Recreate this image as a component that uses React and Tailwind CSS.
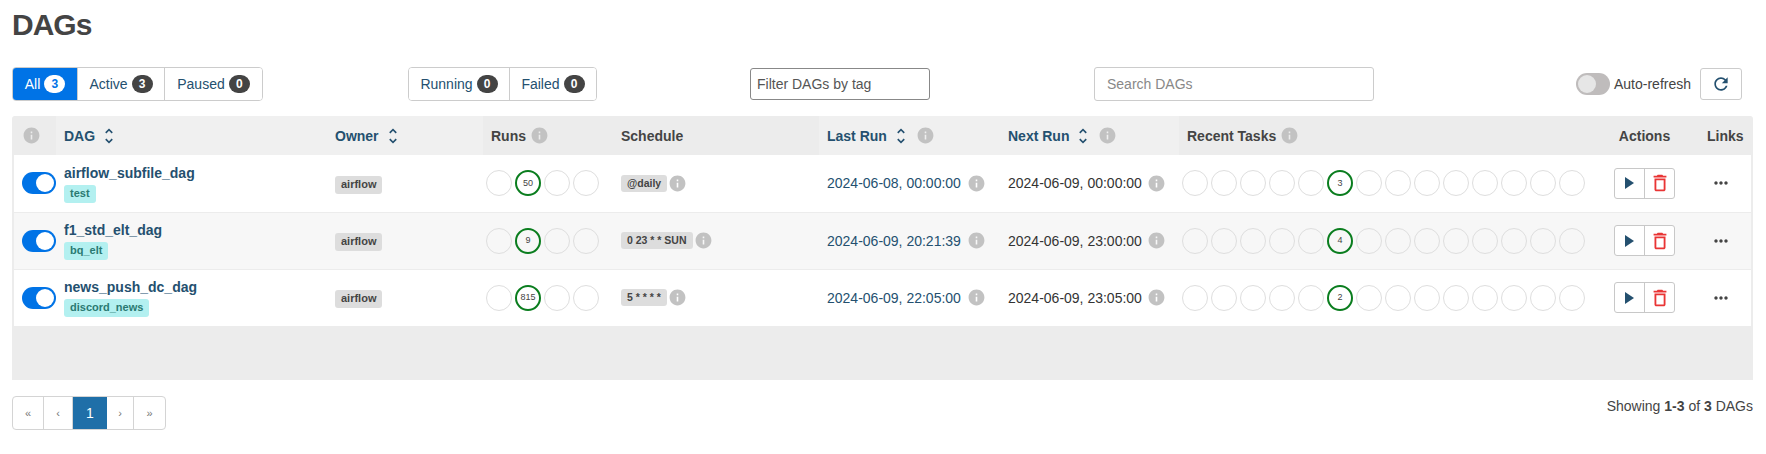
import { Fragment } from "react";

const dags = [
  { name: "airflow_subfile_dag", tag: "test", runs: "50", schedule: "@daily", last: "2024-06-08, 00:00:00", next: "2024-06-09, 00:00:00", tasks: "3" },
  { name: "f1_std_elt_dag", tag: "bq_elt", runs: "9", schedule: "0 23 * * SUN", last: "2024-06-09, 20:21:39", next: "2024-06-09, 23:00:00", tasks: "4" },
  { name: "news_push_dc_dag", tag: "discord_news", runs: "815", schedule: "5 * * * *", last: "2024-06-09, 22:05:00", next: "2024-06-09, 23:05:00", tasks: "2" },
];

const taskSlots = [0, 1, 2, 3, 4, 5, 6, 7, 8, 9, 10, 11, 12, 13];
const runSlots = [0, 1, 2, 3];

function InfoIcon({ className = "" }) {
  return (
    <svg viewBox="0 0 24 24" className={`w-[19px] h-[19px] shrink-0 fill-[#c2c2c2] ${className}`}>
      <path d="M12 2C6.48 2 2 6.48 2 12s4.48 10 10 10 10-4.48 10-10S17.52 2 12 2zm1 15h-2v-6h2v6zm0-8h-2V7h2v2z" />
    </svg>
  );
}

function SortIcon() {
  return (
    <svg viewBox="0 0 24 24" className="w-5 h-5 shrink-0 fill-[#24506f]">
      <path d="M12 5.83L15.17 9l1.41-1.41L12 3 7.41 7.59 8.83 9 12 5.83zm0 12.34L8.83 15l-1.41 1.41L12 21l4.59-4.59L15.17 15 12 18.17z" />
    </svg>
  );
}

function Count({ value, active }) {
  return (
    <span className={`ml-1 inline-flex h-[18px] w-[21px] items-center justify-center rounded-full text-xs font-bold ${active ? "bg-white text-[#0073e6]" : "bg-[#444444] text-white"}`}>
      {value}
    </span>
  );
}

function FilterButton({ label, value, active, width }) {
  return (
    <a className={`flex items-center justify-center text-sm border-l first:border-l-0 border-[#cccccc] ${width} ${active ? "bg-[#0073e6] text-white" : "bg-white text-[#24506f]"}`}>
      {label}
      <Count value={value} active={active} />
    </a>
  );
}

function Toggle({ on }) {
  return (
    <span className={`flex h-[22px] w-[34px] shrink-0 items-center rounded-full px-[2px] ${on ? "justify-end bg-[#0073e6]" : "justify-start bg-[#bfbcbc]"}`}>
      <span className={`h-[18px] w-[18px] rounded-full ${on ? "bg-white" : "bg-[#e6e6e6]"}`} />
    </span>
  );
}

function Circle({ value }) {
  if (value) {
    return (
      <span className="flex h-[26px] w-[26px] shrink-0 items-center justify-center rounded-full border-2 border-[#0a7d1e] text-[9px] text-[#444444]">
        {value}
      </span>
    );
  }
  return <span className="h-[26px] w-[26px] shrink-0 rounded-full border-[1.5px] border-[#dedede]" />;
}

function SortHeader({ label, info, gap }) {
  return (
    <div className="flex items-center text-[#24506f]">
      <span>{label}</span>
      <span className="ml-1"><SortIcon /></span>
      {info && <InfoIcon className={gap} />}
    </div>
  );
}

function Row({ dag, index }) {
  const rowBg = index % 2 === 1 ? "bg-[#f7f7f7]" : "bg-white";
  return (
    <tr className={`h-[57px] border-b border-[#ececec] ${rowBg}`}>
      <td className="pl-2 align-middle">
        <Toggle on />
      </td>
      <td className="px-2">
        <div className="text-sm font-bold leading-[18px] text-[#24506f]">{dag.name}</div>
        <span className="mt-[1px] inline-flex h-[18px] items-center rounded-[3px] bg-[#b3f0f0] px-[6px] text-[11px] font-bold text-[#2a7a72]">{dag.tag}</span>
      </td>
      <td className="px-2">
        <span className="inline-flex h-[18px] items-center rounded-[3px] bg-[#dddddd] px-[6px] text-[11px] font-bold text-[#444444]">airflow</span>
      </td>
      <td className="pl-[3px]">
        <div className="flex gap-[3px]">
          {runSlots.map((slot) => (
            <Circle key={slot} value={slot === 1 ? dag.runs : null} />
          ))}
        </div>
      </td>
      <td className="px-2">
        <div className="flex items-center">
          <span className="inline-flex h-[17px] items-center rounded-[3px] bg-[#dddddd] px-[6px] text-[10.5px] font-bold text-[#444444] whitespace-nowrap">{dag.schedule}</span>
          <InfoIcon className="ml-[1px]" />
        </div>
      </td>
      <td className="px-2">
        <div className="flex items-center text-sm text-[#24506f]">
          <span>{dag.last}</span>
          <InfoIcon className="ml-[6px]" />
        </div>
      </td>
      <td className="px-2">
        <div className="flex items-center text-sm text-[#333333]">
          <span>{dag.next}</span>
          <InfoIcon className="ml-[5px]" />
        </div>
      </td>
      <td className="pl-[3px]">
        <div className="flex gap-[3px]">
          {taskSlots.map((slot) => (
            <Circle key={slot} value={slot === 5 ? dag.tasks : null} />
          ))}
        </div>
      </td>
      <td>
        <div className="mx-auto flex h-[31px] w-[61px] rounded-[3px] border border-[#c8c8c8] bg-white">
          <span className="flex w-[30px] items-center justify-center border-r border-[#c8c8c8]">
            <svg viewBox="0 0 9 12" className="h-3 w-[9px] fill-[#24506f]">
              <path d="M0 0l9 6-9 6z" />
            </svg>
          </span>
          <span className="flex flex-1 items-center justify-center">
            <svg viewBox="0 0 24 24" className="h-[22px] w-[22px] fill-[#e93535]">
              <path d="M6 19c0 1.1.9 2 2 2h8c1.1 0 2-.9 2-2V7H6v12zM8 9h8v10H8V9zm7.5-5l-1-1h-5l-1 1H5v2h14V4z" />
            </svg>
          </span>
        </div>
      </td>
      <td>
        <svg viewBox="0 0 24 24" className="mx-auto h-5 w-5 fill-[#444444]">
          <path d="M6 10c-1.1 0-2 .9-2 2s.9 2 2 2 2-.9 2-2-.9-2-2-2zm12 0c-1.1 0-2 .9-2 2s.9 2 2 2 2-.9 2-2-.9-2-2-2zm-6 0c-1.1 0-2 .9-2 2s.9 2 2 2 2-.9 2-2-.9-2-2-2z" />
        </svg>
      </td>
    </tr>
  );
}

const pageCells = [
  { label: "«", width: "w-[31px]" },
  { label: "‹", width: "w-[29px]" },
  { label: "1", width: "w-[34px]" },
  { label: "›", width: "w-[27px]" },
  { label: "»", width: "w-[31px]" },
];

export default function App() {
  return (
    <div className="min-h-screen bg-white pl-3 pr-[13px] pt-2 font-['Liberation_Sans',Arial,sans-serif] text-[#444444]">
      <h2 className="h-[33px] text-[30px] font-bold leading-[33px] tracking-[-1px] text-[#444444]">DAGs</h2>

      <div className="mt-[26px] flex h-[34px] items-center">
        <div className="flex h-[34px] overflow-hidden rounded-[4px] border border-[#cccccc]">
          <FilterButton label="All" value="3" active width="w-[64px]" />
          <FilterButton label="Active" value="3" width="w-[87px]" />
          <FilterButton label="Paused" value="0" width="w-[98px]" />
        </div>
        <div className="ml-[145px] flex h-[34px] overflow-hidden rounded-[4px] border border-[#cccccc]">
          <FilterButton label="Running" value="0" width="w-[100px]" />
          <FilterButton label="Failed" value="0" width="w-[87px]" />
        </div>
        <div className="ml-[153px] flex h-[32px] w-[180px] items-center rounded-[3px] border border-[#888888] pl-[6px] text-sm text-[#555555]">
          Filter DAGs by tag
        </div>
        <div className="ml-[164px] flex h-[34px] w-[280px] items-center rounded-[3px] border border-[#cccccc] pl-3 text-sm text-[#888888]">
          Search DAGs
        </div>
        <div className="ml-[202px] flex items-center">
          <Toggle />
          <span className="ml-1 text-sm text-[#444444]">Auto-refresh</span>
        </div>
        <div className="ml-[9px] flex h-[32px] w-[42px] items-center justify-center rounded-[3px] border border-[#cccccc]">
          <svg viewBox="0 0 24 24" className="h-5 w-5 fill-[#24506f]">
            <path d="M17.65 6.35C16.2 4.9 14.21 4 12 4c-4.42 0-7.99 3.58-7.99 8s3.57 8 7.99 8c3.73 0 6.84-2.55 7.73-6h-2.08c-.82 2.33-3.04 4-5.65 4-3.31 0-6-2.69-6-6s2.69-6 6-6c1.66 0 3.14.69 4.22 1.78L13 11h7V4l-2.35 2.35z" />
          </svg>
        </div>
      </div>

      <div className="mt-[15px] h-[264px] w-[1741px] rounded-t-[3px] border-x-2 border-[#ececec] bg-[#ececec]">
        <table className="w-[1737px] table-fixed border-collapse text-sm">
          <colgroup>
            <col className="w-[42px]" />
            <col className="w-[271px]" />
            <col className="w-[156px]" />
            <col className="w-[130px]" />
            <col className="w-[206px]" />
            <col className="w-[181px]" />
            <col className="w-[179px]" />
            <col className="w-[419px]" />
            <col className="w-[93px]" />
            <col className="w-[60px]" />
          </colgroup>
          <thead>
            <tr className="h-[39px] text-left font-bold">
              <th className="bg-[#ececec] pl-2"><InfoIcon /></th>
              <th className="bg-[#f0f0f0] px-2"><SortHeader label="DAG" /></th>
              <th className="bg-[#f0f0f0] px-2"><SortHeader label="Owner" /></th>
              <th className="bg-[#ececec] px-2">
                <div className="flex items-center"><span>Runs</span><InfoIcon className="ml-1" /></div>
              </th>
              <th className="bg-[#ececec] px-2">Schedule</th>
              <th className="bg-[#f0f0f0] px-2"><SortHeader label="Last Run" info gap="ml-[5px]" /></th>
              <th className="bg-[#f0f0f0] px-2"><SortHeader label="Next Run" info gap="ml-[5px]" /></th>
              <th className="bg-[#ececec] px-2">
                <div className="flex items-center"><span>Recent Tasks</span><InfoIcon className="ml-1" /></div>
              </th>
              <th className="bg-[#ececec] text-center">Actions</th>
              <th className="bg-[#ececec] pl-4">Links</th>
            </tr>
          </thead>
          <tbody>
            {dags.map((dag, index) => (
              <Fragment key={dag.name}>
                <Row dag={dag} index={index} />
              </Fragment>
            ))}
          </tbody>
        </table>
      </div>

      <div className="mt-4 flex w-[1741px] items-start justify-between">
        <div className="flex h-[34px] overflow-hidden rounded-[4px] border border-[#d4d4d4]">
          {pageCells.map((cell) => (
            <span
              key={cell.label}
              className={
                cell.label === "1"
                  ? `flex ${cell.width} items-center justify-center bg-[#1f6fa8] text-sm text-white`
                  : `flex ${cell.width} items-center justify-center border-r border-[#d4d4d4] text-[11px] text-[#777777] last:border-r-0`
              }
            >
              {cell.label}
            </span>
          ))}
        </div>
        <div className="text-sm leading-5 text-[#444444]">
          Showing <b>1-3</b> of <b>3</b> DAGs
        </div>
      </div>
    </div>
  );
}
